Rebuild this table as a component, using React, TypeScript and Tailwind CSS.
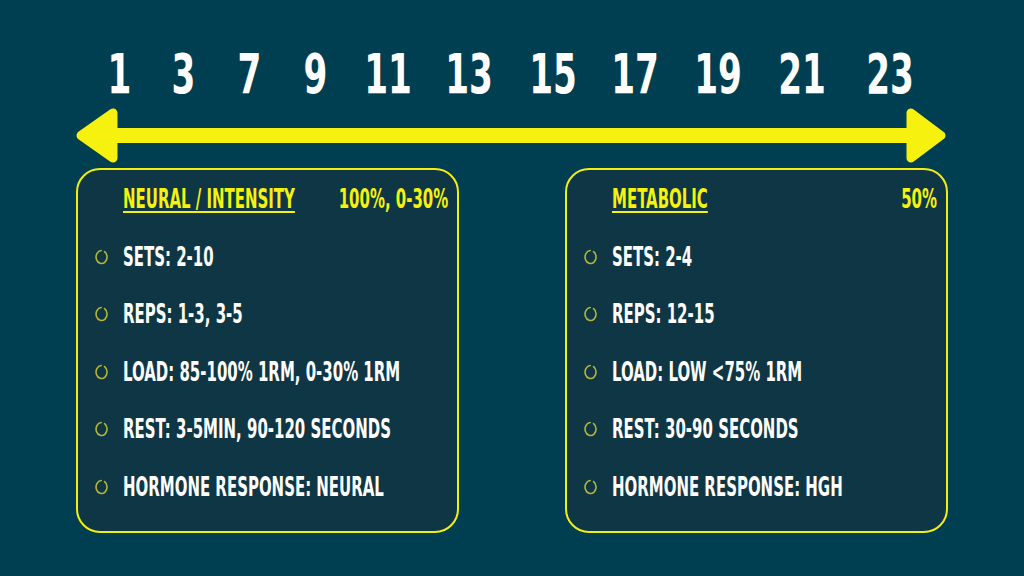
import React from "react";

const font = { fontFamily: '"DejaVu Sans Condensed", "Liberation Sans", sans-serif' };

const numbers: { n: string; w: string }[] = [
  { n: "1", w: "w-[60px]" },
  { n: "3", w: "w-[68px]" },
  { n: "7", w: "w-[64px]" },
  { n: "9", w: "w-[68px]" },
  { n: "11", w: "w-[76px]" },
  { n: "13", w: "w-[86px]" },
  { n: "15", w: "w-[82px]" },
  { n: "17", w: "w-[82px]" },
  { n: "19", w: "w-[84px]" },
  { n: "21", w: "w-[84px]" },
  { n: "23", w: "w-[92px]" },
];

function Bullet() {
  return (
    <svg width="14" height="16" viewBox="0 0 14 16" className="shrink-0">
      <path
        d="M9.6 2.6 A5.5 6.5 0 1 1 6.2 1.55"
        fill="none"
        stroke="#b4b63a"
        strokeWidth="1.6"
        strokeLinecap="round"
      />
    </svg>
  );
}

function Card({ title, right, items }: { title: string; right: string; items: string[] }) {
  return (
    <div className="w-[383px] h-[365px] rounded-[24px] border-2 border-[#f3ee12] bg-[#0f3644] flex flex-col">
      <div className="h-[58px] flex items-center pl-[45px] pr-[9px]">
        <div className="flex-1 min-w-0 flex">
          <span className="inline-block scale-x-[0.64] origin-left text-[26px] leading-none font-bold text-[#f6f10e] underline decoration-2 underline-offset-[3px] whitespace-nowrap">
            {title}
          </span>
        </div>
        <div className="w-[110px] shrink-0 flex justify-end">
          <span className="inline-block scale-x-[0.64] origin-right text-[26px] leading-none font-bold text-[#f6f10e] whitespace-nowrap">
            {right}
          </span>
        </div>
      </div>
      {items.map((t) => (
        <div key={t} className="h-[57.5px] flex items-center pl-[17px]">
          <Bullet />
          <span className="ml-[14px] inline-block scale-x-[0.64] origin-left text-[26px] leading-none font-bold text-white whitespace-nowrap">
            {t}
          </span>
        </div>
      ))}
    </div>
  );
}

export default function App() {
  return (
    <div className="w-[1024px] h-[576px] bg-[#003f51] overflow-hidden" style={font}>
      <div className="flex pl-[90px] pt-[46px]">
        {numbers.map((x) => (
          <div key={x.n} className={`${x.w} flex justify-center`}>
            <span className="inline-block scale-x-[0.68] text-[56px] leading-none font-bold text-white">
              {x.n}
            </span>
          </div>
        ))}
      </div>
      <svg width="1024" height="66" viewBox="0 0 1024 66" className="block">
        <rect x="110" y="26" width="805" height="15" fill="#f6f10e" />
        <polygon
          points="81,33.5 113,11 113,56"
          fill="#f6f10e"
          stroke="#f6f10e"
          strokeWidth="9"
          strokeLinejoin="round"
        />
        <polygon
          points="941,33.5 911,11 911,56"
          fill="#f6f10e"
          stroke="#f6f10e"
          strokeWidth="9"
          strokeLinejoin="round"
        />
      </svg>
      <div className="flex pl-[76px] gap-[106px]">
        <Card
          title="NEURAL / INTENSITY"
          right="100%, 0-30%"
          items={[
            "SETS: 2-10",
            "REPS: 1-3, 3-5",
            "LOAD: 85-100% 1RM, 0-30% 1RM",
            "REST: 3-5MIN, 90-120 SECONDS",
            "HORMONE RESPONSE: NEURAL",
          ]}
        />
        <Card
          title="METABOLIC"
          right="50%"
          items={[
            "SETS: 2-4",
            "REPS: 12-15",
            "LOAD: LOW <75% 1RM",
            "REST: 30-90 SECONDS",
            "HORMONE RESPONSE: HGH",
          ]}
        />
      </div>
    </div>
  );
}
